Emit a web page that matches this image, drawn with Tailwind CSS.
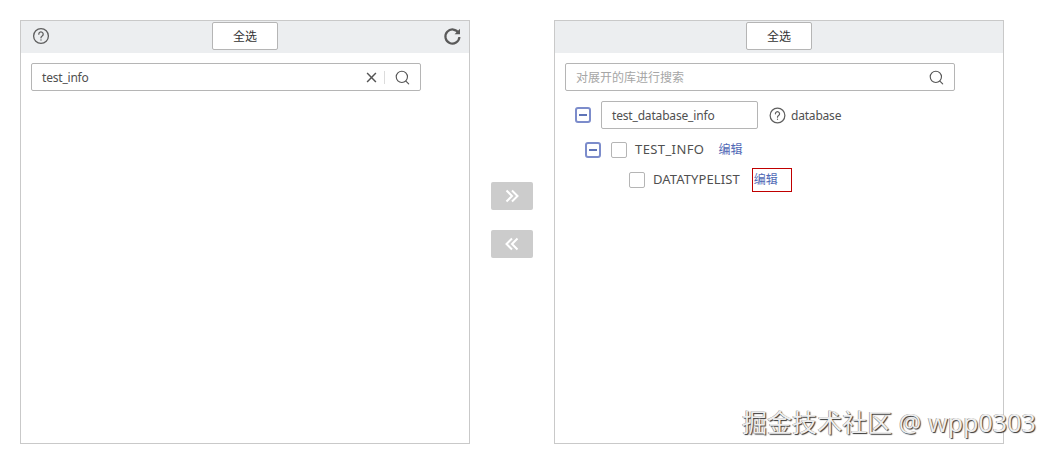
<!doctype html>
<html lang="zh">
<head>
<meta charset="utf-8">
<script src="https://cdn.jsdelivr.net/npm/@tailwindcss/browser@4"></script>
</head>
<body class="bg-white">
<div class="relative w-[1051px] h-[453px] overflow-hidden flex items-start pt-[20px] pl-[20px] font-['Noto_Sans','Noto_Sans_CJK_SC',sans-serif] text-[12px] text-[#505050]">

  <!-- left panel -->
  <section class="w-[450px] h-[424px] border border-[#c9c9c9] bg-white">
    <header class="relative h-[32px] bg-[#eceef0] flex items-center justify-center">
      <svg class="absolute left-[11px] top-[6px]" width="18" height="18" viewBox="0 0 18 18" fill="none" stroke="#5f5f5f" stroke-width="1.3" stroke-linecap="round"><circle cx="9" cy="9" r="7.4"/><path d="M6.8 7.2a2.2 2.2 0 1 1 3.4 1.8c-.8.5-1.2 1-1.2 1.8"/><path d="M9 12.8v.3"/></svg>
      <button class="w-[66px] h-[28px] mt-[-2px] pt-[1px] bg-white border border-[#b5b5b5] rounded-[2px] text-[#333]">全选</button>
      <svg class="absolute right-[7px] top-[6px]" width="19" height="19" viewBox="0 0 19 19" fill="none" stroke="#5a5a5a" stroke-width="2.2"><path d="M15.6 6.2A7 7 0 1 0 16.4 10"/><path d="M17 1.800v5.400h-5.400" stroke-width="0" fill="#5a5a5a"/></svg>
    </header>
    <div class="pt-[10px] pl-[10px]">
      <div class="w-[390px] h-[28px] border border-[#b5b5b5] rounded-[2px] flex items-center pl-[10px] pr-[10px]">
        <span class="flex-1 pt-[2px] tracking-[-0.2px]">test_info</span>
        <svg width="11" height="11" viewBox="0 0 12 12" fill="none" stroke="#555" stroke-width="1.6"><path d="M1.200 1.200l9.600 9.600M10.800 1.200l-9.600 9.600"/></svg>
        <span class="w-px h-[13px] bg-[#dcdcdc] ml-[7px] mr-[10px]"></span>
        <svg width="15" height="15" viewBox="0 0 16 16" fill="none" stroke="#555" stroke-width="1.200" stroke-linecap="round"><circle cx="7.300" cy="7.300" r="6"/><path d="M11.600 11.800l3 3"/></svg>
      </div>
    </div>
  </section>

  <!-- transfer buttons -->
  <div class="w-[84px] flex flex-col items-center gap-[20px] pt-[162px]">
    <button class="w-[42px] h-[28px] bg-[#cccccc] rounded-[2px] flex items-center justify-center">
      <svg width="14" height="14" viewBox="0 0 14 14" fill="none" stroke="#fff" stroke-width="2"><path d="M1.500 1.500L7 7l-5.500 5.500M7 1.500L12.500 7 7 12.500"/></svg>
    </button>
    <button class="w-[42px] h-[28px] bg-[#cccccc] rounded-[2px] flex items-center justify-center">
      <svg width="14" height="14" viewBox="0 0 14 14" fill="none" stroke="#fff" stroke-width="2"><path d="M12.500 1.500L7 7l5.500 5.500M7 1.500L1.500 7 7 12.500"/></svg>
    </button>
  </div>

  <!-- right panel -->
  <section class="w-[450px] h-[424px] border border-[#c9c9c9] bg-white">
    <header class="h-[32px] bg-[#eceef0] flex items-center justify-center">
      <button class="w-[66px] h-[28px] mt-[-2px] pt-[1px] bg-white border border-[#b5b5b5] rounded-[2px] text-[#333]">全选</button>
    </header>
    <div class="pt-[10px] pl-[10px]">
      <div class="w-[390px] h-[28px] border border-[#b5b5b5] rounded-[2px] flex items-center pl-[10px] pr-[10px]">
        <span class="flex-1 pt-[2px] text-[#a6a6a6]">对展开的库进行搜索</span>
        <svg width="15" height="15" viewBox="0 0 16 16" fill="none" stroke="#555" stroke-width="1.200" stroke-linecap="round"><circle cx="7.300" cy="7.300" r="6"/><path d="M11.600 11.800l3 3"/></svg>
      </div>
      <div class="flex items-center mt-[10px] pl-[10px]">
        <span class="w-[16px] h-[16px] border-2 border-[#7c8ccb] rounded-[3px] flex items-center justify-center"><span class="w-[8px] h-[2px] bg-[#5f74b8]"></span></span>
        <span class="w-[157px] h-[28px] ml-[10px] pt-[2px] border border-[#b5b5b5] rounded-[2px] flex items-center pl-[10px] tracking-[-0.17px]">test_database_info</span>
        <svg class="ml-[11px]" width="17" height="17" viewBox="0 0 18 18" fill="none" stroke="#5f5f5f" stroke-width="1.300" stroke-linecap="round"><circle cx="9" cy="9" r="7.800"/><path d="M6.800 7.200a2.200 2.200 0 1 1 3.400 1.800c-.8.500-1.200 1-1.200 1.800"/><path d="M9 12.800v.3"/></svg>
        <span class="ml-[5px] pt-[2px] tracking-[-0.2px]">database</span>
      </div>
      <div class="flex items-center h-[16px] mt-[13px] pl-[20px]">
        <span class="w-[16px] h-[16px] border-2 border-[#7c8ccb] rounded-[3px] flex items-center justify-center"><span class="w-[8px] h-[2px] bg-[#5f74b8]"></span></span>
        <span class="w-[16px] h-[16px] ml-[10px] border border-[#b5b5b5] rounded-[2px]"></span>
        <span class="ml-[8px] text-[13px] tracking-[0.4px]">TEST_INFO</span>
        <span class="ml-[14px] text-[#4f68b5]">编辑</span>
      </div>
      <div class="flex items-center h-[24px] mt-[10px] pl-[64px]">
        <span class="w-[16px] h-[16px] border border-[#b5b5b5] rounded-[2px]"></span>
        <span class="ml-[8px] text-[13px] tracking-[0.1px]">DATATYPELIST</span>
        <span class="ml-[12px] w-[40px] h-[24px] border border-[#c00000] flex items-center pl-[1px] text-[#4f68b5]">编辑</span>
      </div>
    </div>
  </section>

  <!-- watermark -->
  <div class="absolute left-[742px] top-[406px] text-[25px] leading-[32px] tracking-[0.05px] whitespace-nowrap text-[#eeeeee] [text-shadow:1px_1px_1px_#333,-0.5px_-0.5px_0_#888]">掘金技术社区 @ wpp0303</div>
</div>
</body>
</html>
